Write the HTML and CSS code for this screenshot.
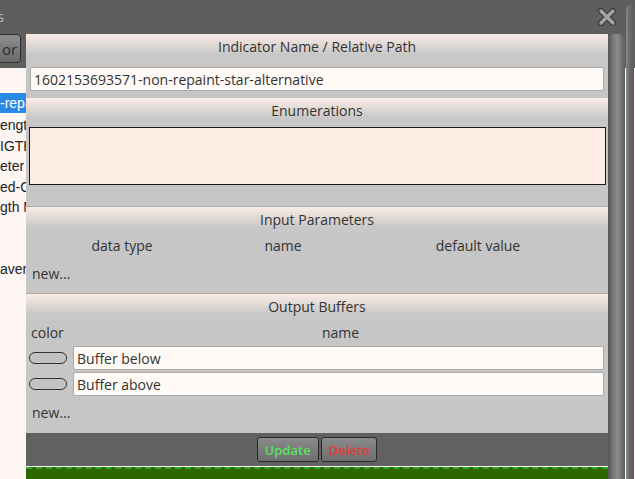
FILE: index.html
```html
<!DOCTYPE html>
<html lang="en">
<head>
    <meta charset="UTF-8">
    <meta name="viewport" content="width=device-width, initial-scale=1.0">
    <title>Indicator Editor</title>
    <link rel="stylesheet" href="styles.css">
</head>
<body>
    <div class="app">
        <div class="titlebar"><span class="title">s</span></div>
        <div class="toolbar"><button class="tool-btn">or</button></div>
        <div class="workspace">
            <ul class="indicator-list">
                <li>&nbsp;</li>
                <li class="selected">-repaint</li>
                <li>engthy</li>
                <li>IGTH</li>
                <li>eter</li>
                <li>ed-Osc</li>
                <li>gth Mod</li>
                <li>&nbsp;</li>
                <li>&nbsp;</li>
                <li>average</li>
            </ul>
            <div class="chart"></div>
        </div>
    </div>

    <svg class="close-x" width="18" height="18" viewBox="0 0 18 18">
        <path d="M3 3 L15 15 M15 3 L3 15" stroke="#3a3a3a" stroke-width="6" stroke-linecap="round"/>
        <path d="M3 3 L15 15 M15 3 L3 15" stroke="#a2a2a2" stroke-width="3.5" stroke-linecap="round"/>
    </svg>
    <div class="outer-scroll"></div>

    <div class="dialog">
        <div class="dialog-body">
            <div class="section-head">Indicator Name / Relative Path</div>
            <div class="field-row name-row">
                <input class="text-input" type="text" value="1602153693571-non-repaint-star-alternative">
            </div>

            <div class="section-head">Enumerations</div>
            <div class="field-row enum-row">
                <textarea class="enum-box"></textarea>
            </div>

            <div class="section-head sep">Input Parameters</div>
            <div class="param-cols">
                <span>data type</span>
                <span>name</span>
                <span>default value</span>
            </div>
            <div class="new-link">new...</div>

            <div class="section-head sep">Output Buffers</div>
            <div class="buffer-cols">
                <span class="col-color">color</span>
                <span class="col-name">name</span>
            </div>
            <div class="buffer-row">
                <span class="swatch"></span>
                <input class="text-input" type="text" value="Buffer below">
            </div>
            <div class="buffer-row">
                <span class="swatch"></span>
                <input class="text-input" type="text" value="Buffer above">
            </div>
            <div class="new-link">new...</div>
        </div>
        <div class="dialog-foot">
            <button class="btn btn-update">Update</button>
            <button class="btn btn-delete">Delete</button>
        </div>
        <div class="dialog-scroll"></div>
    </div>
</body>
</html>
```

FILE: styles.css
```css
body {
    margin: 0;
    width: 635px;
    height: 479px;
    overflow: hidden;
    background: #5e5e5e;
    font-family: "Open Sans", "Noto Sans", sans-serif;
    font-size: 14px;
    color: #333;
}
.app {
    display: flex;
    flex-direction: column;
    height: 479px;
}
.titlebar {
    height: 34px;
    position: relative;
}
.title {
    position: absolute;
    left: -3px;
    top: 6px;
    font-size: 15px;
    color: #b8b8b8;
}
.toolbar {
    height: 34px;
    display: flex;
    align-items: flex-start;
}
.tool-btn {
    margin-left: -20px;
    width: 41px;
    height: 29px;
    padding: 0 0 0 18px;
    border: 1px solid #2e2e2e;
    border-radius: 4px;
    background: linear-gradient(#8e8e8e, #6a6a6a);
    color: #2a2a2a;
    font-family: inherit;
    font-size: 15px;
}
.workspace {
    flex: 1;
    display: flex;
    background: #fdf6f2;
}
.indicator-list {
    list-style: none;
    margin: 4px 0 0 0;
    padding: 0;
    width: 26px;
    overflow: hidden;
    font-family: "Liberation Sans", Arial, sans-serif;
    font-size: 14px;
    color: #222;
}
.indicator-list li {
    height: 20.6px;
    line-height: 20px;
    white-space: nowrap;
    margin-left: -2px;
    padding-left: 2px;
}
.indicator-list li.selected {
    height: 20px;
    margin-bottom: 2.5px;
    background: #2a8ae6;
    color: #fff;
}
.chart {
    flex: 1;
    align-self: flex-end;
    height: 10px;
    margin-right: 27px;
    background: #2b6800;
    border-top: 2px dashed #2fa42f;
}
.close-x {
    position: absolute;
    left: 598px;
    top: 8px;
}
.outer-scroll {
    position: absolute;
    left: 626px;
    top: 4px;
    width: 8px;
    height: 480px;
    border-radius: 6px 0 0 0;
    background: linear-gradient(to right, #8c8c8c, #6c6c6c 40%, #5c5c5c);
}

/* editor window */
.dialog {
    position: absolute;
    left: 26px;
    top: 34px;
    width: 582px;
    height: 432px;
    display: flex;
    flex-direction: column;
}
.dialog-body {
    flex: 1;
    background: #c6c6c6;
    display: flex;
    flex-direction: column;
}
.section-head {
    height: 27px;
    line-height: 26px;
    text-align: center;
    flex-shrink: 0;
    background: linear-gradient(#fbece5, #c8c8c8 75%);
}
.section-head.sep {
    border-top: 1px solid #a9a9a9;
}
.field-row {
    padding: 0 4px;
}
.name-row {
    padding: 6px 4px 7px 4px;
}
.enum-row {
    padding: 2px 3px 21px 3px;
}
.text-input {
    box-sizing: border-box;
    width: 100%;
    height: 24px;
    padding: 0 3px;
    border: 1px solid #a9a9a9;
    border-radius: 2px;
    background: #fffaf6;
    font-family: inherit;
    font-size: 14px;
    color: #333;
}
.enum-box {
    display: block;
    box-sizing: border-box;
    width: 577px;
    height: 58px;
    margin: 0;
    border: 1px solid #1a1a1a;
    background: #fdece4;
    resize: none;
}
.param-cols {
    display: grid;
    grid-template-columns: 192px 130px 1fr;
    height: 24px;
    line-height: 24px;
}
.param-cols span {
    text-align: center;
}
.new-link {
    padding-left: 6px;
    height: 35px;
    line-height: 32px;
    flex-shrink: 0;
}
.buffer-cols {
    display: flex;
    height: 24px;
    line-height: 24px;
}
.col-color {
    width: 52px;
    padding-left: 5px;
}
.col-name {
    flex: 1;
    text-align: center;
    padding-right: 10px;
}
.buffer-row {
    display: flex;
    align-items: center;
    gap: 6px;
    padding: 0 4px 0 3px;
    height: 26px;
}
.buffer-row .text-input {
    flex: 1;
}
.swatch {
    width: 36px;
    height: 10px;
    border: 1px solid #333;
    border-radius: 6px;
    background: #c2c2c2;
}
.dialog-foot {
    height: 33px;
    flex-shrink: 0;
    background: #616161;
    display: flex;
    justify-content: center;
    align-items: center;
    gap: 2px;
}
.btn {
    height: 25px;
    padding: 0 7px;
    border: 1px solid #2a2a2a;
    border-radius: 3px;
    background: linear-gradient(#8a8a8a, #6e6e6e);
    font-family: inherit;
    font-size: 13px;
    font-weight: 600;
}
.btn-update {
    color: #5ce05c;
}
.btn-delete {
    color: #e23a3a;
}
.dialog-scroll {
    position: absolute;
    left: 582px;
    top: 0;
    width: 17px;
    height: 445px;
    border-radius: 7px 7px 0 0;
    background: linear-gradient(to right, #555, #7e7e7e 35%, #8a8a8a 55%, #5e5e5e);
}
```
